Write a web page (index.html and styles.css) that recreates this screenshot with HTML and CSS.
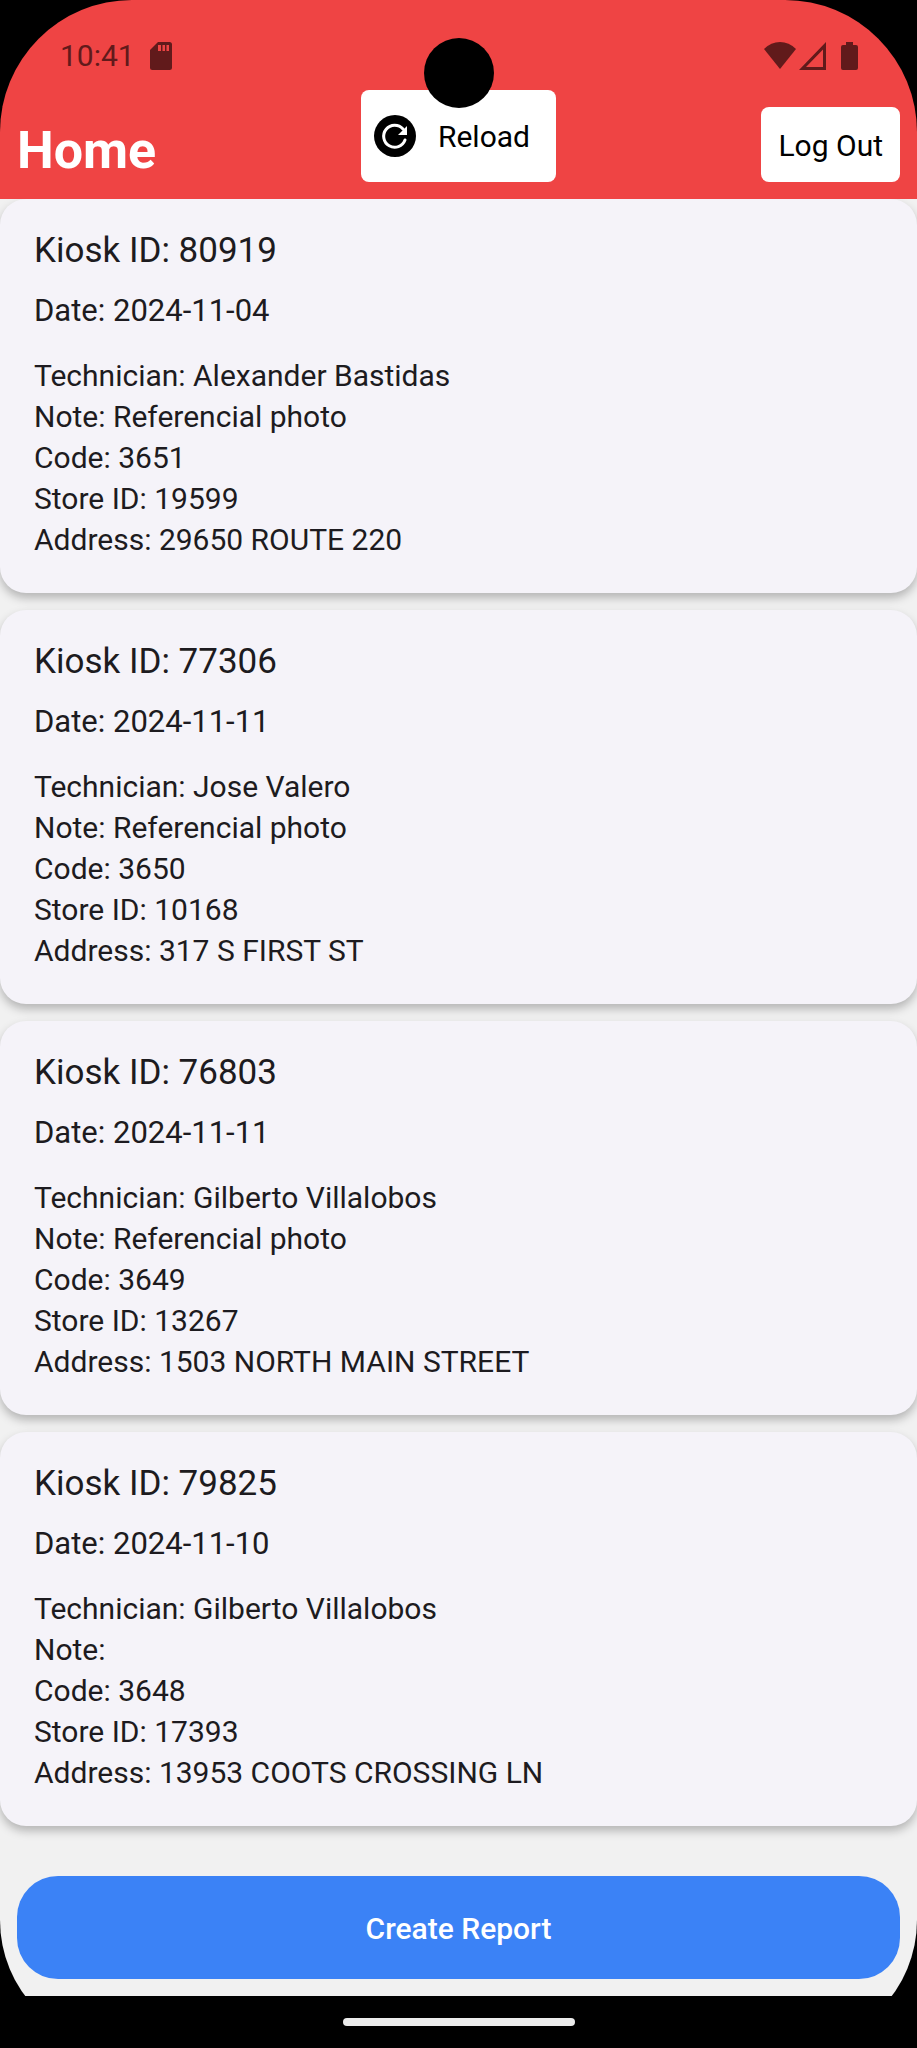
FILE: index.html
```html
<!DOCTYPE html>
<html lang="en">
<head>
    <meta charset="UTF-8">
    <meta name="viewport" content="width=device-width, initial-scale=1.0">
    <title>Home</title>
    <link rel="stylesheet" href="styles.css">
</head>
<body>
    <div class="screen">
        <header class="header">
            <div class="camera"></div>

            <!-- Status bar -->
            <div class="status-bar">
                <span class="time">10:41</span>
                <svg class="sd-card" width="22" height="28" viewBox="0 0 22 28" aria-hidden="true">
                    <path fill-rule="evenodd" d="M8 0H19.500Q22 0 22 2.500V25.500Q22 28 19.500 28H2.500Q0 28 0 25.500V8ZM8 3V9H11V3ZM12.500 3V9H15V3ZM16.500 3V9H19V3Z"/>
                </svg>
                <div class="signals">
                    <svg width="32" height="28" viewBox="0 0 32 28" aria-hidden="true">
                        <path d="M0 7Q7 0 16 0T32 7L16 27Z"/>
                    </svg>
                    <svg class="cell" width="27" height="28" viewBox="0 0 27 28" aria-hidden="true">
                        <path fill-rule="evenodd" d="M27 0V28H0ZM24 7.500L7 25H24Z"/>
                    </svg>
                    <svg class="battery" width="17" height="28" viewBox="0 0 17 28" aria-hidden="true">
                        <path d="M5 0H12V3H15Q17 3 17 5V26Q17 28 15 28H2Q0 28 0 26V5Q0 3 2 3H5Z"/>
                    </svg>
                </div>
            </div>

            <div class="title-bar">
                <h1>Home</h1>
                <button type="button" class="btn reload">
                    <svg width="42" height="42" viewBox="0 0 42 42" aria-hidden="true">
                        <circle cx="21" cy="21" r="21"/>
                        <path d="M31 25A11 11 0 1 1 29 14" fill="none" stroke="#fff" stroke-width="3" stroke-linecap="round"/>
                        <path d="M33 11V20H24Z" fill="#fff"/>
                    </svg>
                    Reload
                </button>
                <button type="button" class="btn logout">Log Out</button>
            </div>
        </header>

        <div class="content">
            <!-- Report list -->
            <main class="reports">
                <article class="card">
                    <h2>Kiosk ID: 80919</h2>
                    <p class="date">Date: 2024-11-04</p>
                    <p>Technician: Alexander Bastidas</p>
                    <p>Note: Referencial photo</p>
                    <p>Code: 3651</p>
                    <p>Store ID: 19599</p>
                    <p>Address: 29650 ROUTE 220</p>
                </article>
                <article class="card">
                    <h2>Kiosk ID: 77306</h2>
                    <p class="date">Date: 2024-11-11</p>
                    <p>Technician: Jose Valero</p>
                    <p>Note: Referencial photo</p>
                    <p>Code: 3650</p>
                    <p>Store ID: 10168</p>
                    <p>Address: 317 S FIRST ST</p>
                </article>
                <article class="card">
                    <h2>Kiosk ID: 76803</h2>
                    <p class="date">Date: 2024-11-11</p>
                    <p>Technician: Gilberto Villalobos</p>
                    <p>Note: Referencial photo</p>
                    <p>Code: 3649</p>
                    <p>Store ID: 13267</p>
                    <p>Address: 1503 NORTH MAIN STREET</p>
                </article>
                <article class="card">
                    <h2>Kiosk ID: 79825</h2>
                    <p class="date">Date: 2024-11-10</p>
                    <p>Technician: Gilberto Villalobos</p>
                    <p>Note:</p>
                    <p>Code: 3648</p>
                    <p>Store ID: 17393</p>
                    <p>Address: 13953 COOTS CROSSING LN</p>
                </article>
            </main>

            <div class="actions">
                <button type="button" class="create">Create Report</button>
            </div>
        </div>

        <div class="nav-bar">
            <div class="handle"></div>
        </div>
    </div>
</body>
</html>
```
FILE: styles.css
```css
* {
    box-sizing: border-box;
}
body {
    margin: 0;
    background: #000;
    color: #1d1b20;
    font-family: Roboto, sans-serif;
    font-size: 30px;
}
h1, h2, p {
    margin: 0;
}
button {
    border: none;
    font-family: inherit;
    font-size: 30px;
    cursor: pointer;
}
.screen {
    display: flex;
    flex-direction: column;
    min-height: 100vh;
    border-radius: 132px 132px 128px 128px;
    overflow: hidden;
}

/* Header */
.header {
    position: relative;
    background: #ef4444;
}
.camera {
    position: absolute;
    top: 38px;
    left: 50%;
    width: 70px;
    height: 70px;
    margin-left: -35px;
    border-radius: 50%;
    background: #000;
}
.status-bar {
    display: flex;
    align-items: center;
    height: 90px;
    padding: 21px 59px 0 60px;
    color: #611a1b;
    fill: #611a1b;
}
.sd-card {
    margin-left: 15px;
}
.signals {
    display: flex;
    margin-left: auto;
}
.cell {
    margin-left: 3px;
}
.battery {
    margin-left: 15px;
}
.title-bar {
    display: grid;
    grid-template-columns: 1fr auto 1fr;
    align-items: end;
    padding: 0 17px;
    padding-bottom: 17px;
}
h1 {
    color: #fff;
    font-size: 52px;
    line-height: 62px;
}
.btn {
    background: #fff;
    color: #000;
    border-radius: 8px;
}
.reload {
    display: flex;
    align-items: center;
    gap: 22px;
    height: 92px;
    padding: 0 26px 0 13px;
}
.logout {
    justify-self: end;
    height: 75px;
    padding: 2px 17px 0;
}

/* Cards */
.content {
    display: flex;
    flex-direction: column;
    flex: 1;
    background: #f1f1f1;
}
.reports {
    display: flex;
    flex-direction: column;
    gap: 17px;
}
.card {
    padding: 28px 34px 33px;
    background: #f5f3f9;
    border-radius: 26px;
    box-shadow: 0 5px 10px rgba(0, 0, 0, 0.25);
}
.card h2 {
    font-size: 35px;
    font-weight: 400;
    line-height: 48px;
    margin-bottom: 15px;
}
.card p {
    line-height: 41px;
}
.card .date {
    margin-bottom: 24px;
    font-size: 31px;
}

/* Bottom */
.actions {
    margin-top: auto;
    padding: 17px;
}
.create {
    display: block;
    width: 100%;
    height: 103px;
    padding: 2px 0 0;
    border-radius: 41px;
    background: #3b82f6;
    color: #fff;
    font-weight: 500;
}
.nav-bar {
    display: flex;
    justify-content: center;
    align-items: center;
    height: 52px;
    background: #000;
}
.handle {
    width: 232px;
    height: 8px;
    border-radius: 4px;
    background: #ebebeb;
}
```
